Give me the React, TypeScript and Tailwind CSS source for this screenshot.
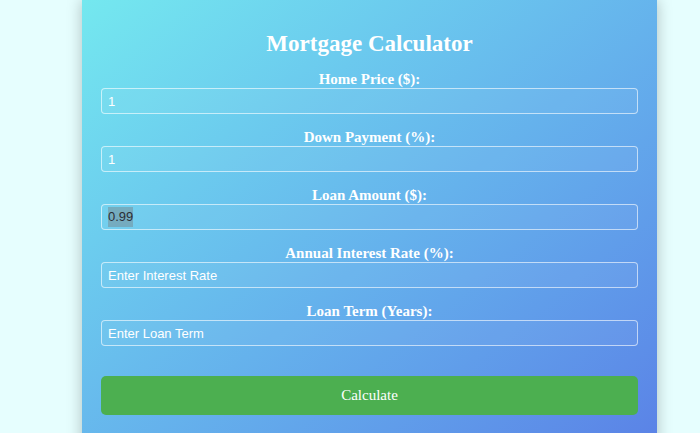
import React from "react";

const serif = { fontFamily: '"Liberation Serif", "Times New Roman", serif' };
const sans = { fontFamily: '"Liberation Sans", Arial, sans-serif' };

function Field({ label, children }: { label: string; children: React.ReactNode }) {
  return (
    <div className="flex flex-col">
      <label className="text-center text-[15px] leading-[17px] font-bold text-white" style={serif}>
        {label}
      </label>
      {children}
    </div>
  );
}

function Input({ value, placeholder }: { value?: string; placeholder?: string }) {
  return (
    <input
      readOnly
      value={value ?? ""}
      placeholder={placeholder}
      className="h-[26px] w-full rounded-[4px] border border-white/60 bg-white/5 px-[6px] text-[13px] text-white placeholder:text-white outline-none"
      style={sans}
    />
  );
}

export default function App() {
  return (
    <div className="flex h-[433px] w-full justify-center overflow-hidden bg-[#e6fefe] pl-[39px]">
      <div className="flex h-[470px] w-[575px] shrink-0 flex-col bg-gradient-to-br from-[#74e8ef] to-[#5a7fe6] px-[19px] pt-[31px] shadow-[0_0_14px_rgba(0,0,0,0.25)]">
        <h1 className="text-center text-[23px] leading-[26px] font-bold text-white" style={serif}>
          Mortgage Calculator
        </h1>
        <div className="mt-[14px] flex flex-col gap-[15px]">
          <Field label="Home Price ($):">
            <Input value="1" />
          </Field>
          <Field label="Down Payment (%):">
            <Input value="1" />
          </Field>
          <Field label="Loan Amount ($):">
            <div
              className="flex h-[26px] w-full items-center rounded-[4px] border border-white/60 bg-white/5 px-[6px] text-[13px]"
              style={sans}
            >
              <span className="bg-[rgba(120,120,120,0.4)] text-[#2b2f36]">0.99</span>
            </div>
          </Field>
          <Field label="Annual Interest Rate (%):">
            <Input placeholder="Enter Interest Rate" />
          </Field>
          <Field label="Loan Term (Years):">
            <Input placeholder="Enter Loan Term" />
          </Field>
        </div>
        <button
          className="mt-[30px] h-[39px] w-full rounded-[5px] bg-[#4caf50] text-[15px] text-white"
          style={serif}
        >
          Calculate
        </button>
      </div>
    </div>
  );
}
